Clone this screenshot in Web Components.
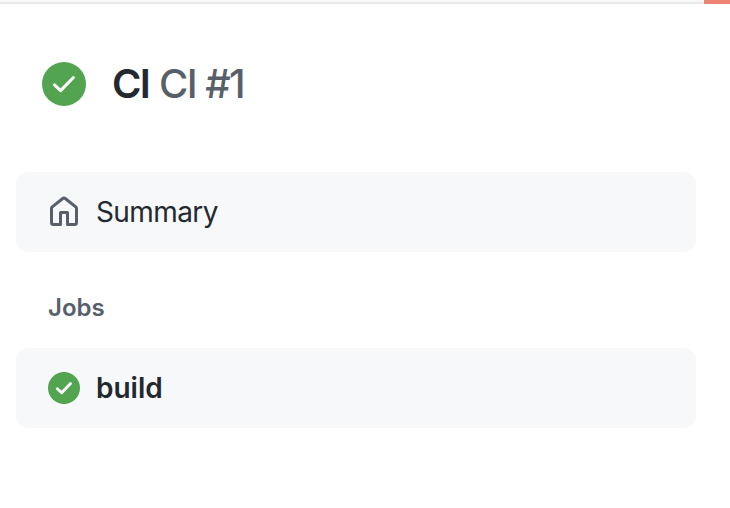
<!DOCTYPE html>
<html lang="en"><head><meta charset="utf-8"><title>CI #1</title>
<style>body{margin:0;background:#fff;font-family:Inter,"Liberation Sans",sans-serif;color:#24292f}</style></head><body>
<run-page></run-page>
<script>
const define=(name,html)=>customElements.define(name,class extends HTMLElement{
 constructor(){super();this.attachShadow({mode:'open'}).innerHTML=html;}
});
define('check-icon',`<style>:host{display:block;flex:none;width:44px;height:44px}svg{display:block;width:100%;height:100%}.small{display:none}:host([small]){width:32px;height:32px}:host([small]) .small{display:block}:host([small]) .large{display:none}</style>
<svg class="large" viewBox="0 0 44 44"><circle cx="22" cy="22" r="22" fill="#52a450"/><path d="M12.5 22.8L18.6 28.6L31.4 15.5" fill="none" stroke="#fff" stroke-width="3" stroke-linecap="round" stroke-linejoin="round"/></svg>
<svg class="small" viewBox="0 0 32 32"><circle cx="16" cy="16" r="16" fill="#52a450"/><path d="M9.3 16.7L13.7 20.8L22.5 11.5" fill="none" stroke="#fff" stroke-width="2.9" stroke-linecap="round" stroke-linejoin="round"/></svg>`);
define('home-icon',`<style>:host{display:block;flex:none;width:32px;height:32px}svg{display:block}</style>
<svg width="32" height="32" viewBox="0 0 16 16" fill="#57606a"><path d="M6.906.664a1.749 1.749 0 0 1 2.187 0l5.25 4.2c.415.332.657.835.657 1.367v7.019A1.75 1.75 0 0 1 13.25 15h-3.5a.75.75 0 0 1-.75-.75V9H7v5.25a.75.75 0 0 1-.75.75h-3.5A1.75 1.75 0 0 1 1 13.25V6.23c0-.531.242-1.034.657-1.366l5.25-4.2Zm1.25 1.171a.25.25 0 0 0-.312 0l-5.25 4.2a.25.25 0 0 0-.094.196v7.019c0 .138.112.25.25.25H5.5V8.25a.75.75 0 0 1 .75-.75h3.5a.75.75 0 0 1 .75.75v5.25h2.75a.25.25 0 0 0 .25-.25V6.23a.25.25 0 0 0-.094-.195Z"/></svg>`);
define('nav-item',`<style>:host{display:flex;align-items:center;gap:16px;box-sizing:border-box;height:80px;padding:0 32px;border-radius:12px;background:#f6f8fa;font-size:28px;line-height:40px}</style><slot name="icon"></slot><slot></slot>`);
define('run-title',`<style>:host{display:flex;align-items:center;gap:26px;padding:0 26px;height:64px}h1{margin:0;font-size:40px;line-height:60px;font-weight:600;white-space:nowrap;letter-spacing:-1.6px}.b{letter-spacing:-1.6px;margin-right:1.2px}.r{font-weight:450;color:#57606a}</style><check-icon></check-icon><h1><span class="b">CI</span> <span class="r">CI #1</span></h1>`);
define('progress-line',`<style>:host{display:flex;justify-content:flex-end;height:4px;background:linear-gradient(#f6f8fa 2px,#e7e9eb 2px)}i{width:26px;height:4px;background:#ec8370}</style><i></i>`);
define('run-page',`<style>:host{display:block;height:508px;overflow:hidden}main{padding:48px 34px 0 16px}.summary{margin-top:56px;font-weight:430;letter-spacing:-.6px}h2{margin:40px 32px 24px;font-size:24px;line-height:32px;font-weight:600;color:#57606a}.build{font-weight:600}</style>
<progress-line></progress-line><main><run-title></run-title><nav-item class="summary"><home-icon slot="icon"></home-icon><span>Summary</span></nav-item><h2>Jobs</h2><nav-item class="build"><check-icon small slot="icon"></check-icon><span>build</span></nav-item></main>`);
</script></body></html>
